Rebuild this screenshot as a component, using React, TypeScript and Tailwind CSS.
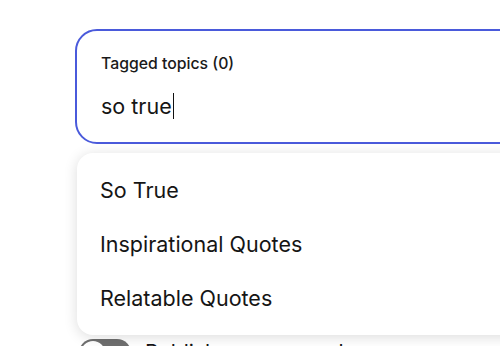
const suggestions = ['So True', 'Inspirational Quotes', 'Relatable Quotes']

const TopicSuggestions = () => {
  return (
    <ul className="absolute left-[77px] top-[153px] w-[460px] rounded-[16px] bg-white py-[10px] shadow-[0_2px_14px_rgba(0,0,0,0.14)]">
      {suggestions.map((s) => (
        <li
          key={s}
          className="flex h-[54px] items-center pl-[23px] text-[21.5px] text-[#151515] cursor-pointer"
        >
          {s}
        </li>
      ))}
    </ul>
  )
}

const App = () => {
  return (
    <div
      className="relative h-[346px] w-[500px] overflow-hidden bg-white pl-[75px] pt-[29px]"
      style={{ fontFamily: 'Inter, "Noto Sans", sans-serif' }}
    >
      <div className="flex h-[115px] w-[480px] flex-col rounded-[22px] border-[2.5px] border-[#4a5adb] px-[24px] pt-[22px]">
        <label className="text-[15.8px] font-medium leading-[22px] text-[#1a1a1a]">
          Tagged topics (0)
        </label>
        <div className="mt-[17px] flex items-center text-[21.5px] leading-[28px] text-[#151515]">
          <span>so true</span>
          <span className="ml-[1px] inline-block h-[26px] w-[1.5px] bg-[#111]" />
        </div>
      </div>

      <div className="mt-[193px] flex items-center gap-[14px] pl-[4px]">
        <div className="flex h-[28px] w-[52px] items-center rounded-full bg-[#6f6f6f] p-[2px]">
          <div className="h-[24px] w-[24px] rounded-full bg-white" />
        </div>
        <span className="text-[21px] text-[#151515]">Publish anonymously</span>
      </div>

      <TopicSuggestions />
    </div>
  )
}

export default App
